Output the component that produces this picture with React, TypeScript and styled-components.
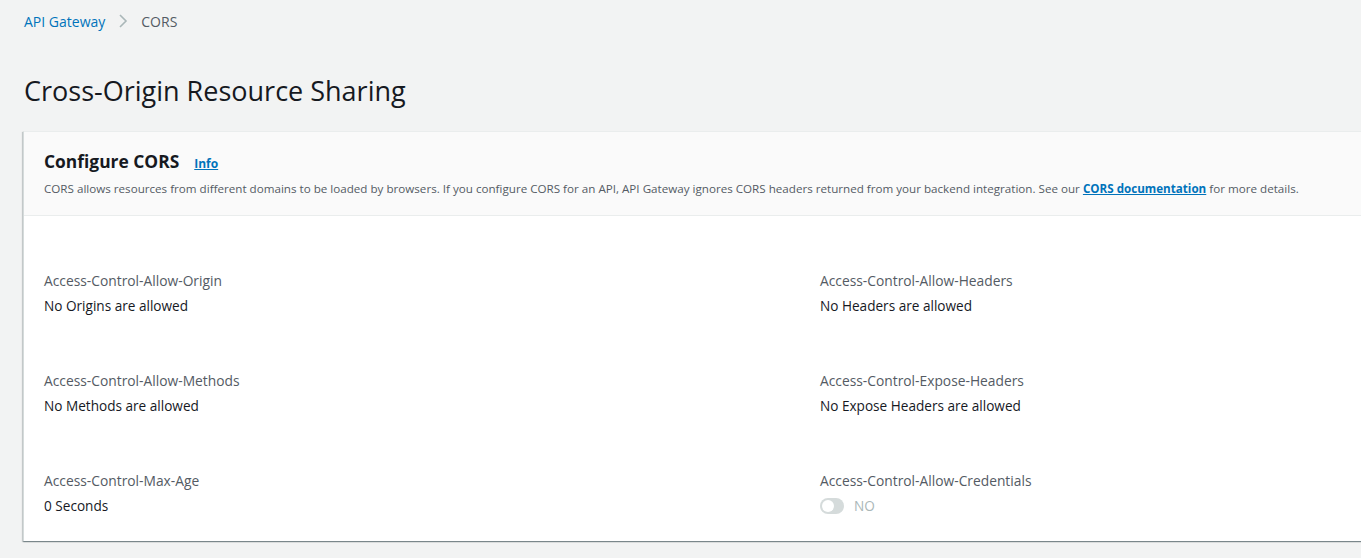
import React from "react";
import styled, { createGlobalStyle } from "styled-components";

const Global = createGlobalStyle`
  html, body { margin: 0; padding: 0; background: #f2f3f3; overflow: hidden; }
  body { font-family: "Open Sans", "Noto Sans", Arial, sans-serif; color: #16191f; }
  * { box-sizing: border-box; }
`;

const Page = styled.div`
  width: 1361px;
  height: 558px;
  overflow: hidden;
  padding: 0 0 0 24px;
`;

const Breadcrumbs = styled.nav`
  display: flex;
  align-items: center;
  height: 42px;
  font-size: 14px;
  gap: 12px;
`;

const Crumb = styled.a`
  color: #0073bb;
  text-decoration: none;
`;

const Current = styled.span`
  color: #545b64;
`;

const Title = styled.h1`
  margin: 0;
  padding: 29px 0 20px;
  font-size: 27px;
  font-weight: 400;
  line-height: 40px;
  color: #16191f;
`;

const Card = styled.section`
  width: 1600px;
  margin-left: -1px;
  background: #fff;
  border-left: 1px solid #d5dbdb;
  border-top: 1px solid #eaeded;
  box-shadow: 0 1px 1px 0 rgba(0, 28, 36, 0.3), 1px 1px 1px 0 rgba(0, 28, 36, 0.15), -1px 1px 1px 0 rgba(0, 28, 36, 0.15);
`;

const Header = styled.header`
  background: #fafafa;
  border-bottom: 1px solid #eaeded;
  padding: 18px 20px 18px;
`;

const HeadRow = styled.div`
  display: flex;
  align-items: baseline;
  gap: 15px;
`;

const H2 = styled.h2`
  margin: 0;
  font-size: 17.4px;
  font-weight: 700;
  line-height: 22px;
`;

const InfoLink = styled.a`
  font-size: 12px;
  font-weight: 700;
  color: #0073bb;
  text-decoration: underline;
`;

const Desc = styled.p`
  margin: 9px 0 0;
  font-size: 11.63px;
  line-height: 16px;
  color: #545b64;
`;

const DocLink = styled.a`
  font-weight: 700;
  color: #0073bb;
  text-decoration: underline;
`;

const Grid = styled.div`
  display: grid;
  grid-template-columns: 776px 1fr;
  grid-auto-rows: 100px;
  padding: 55px 20px 0;
  height: 325px;
`;

const Field = styled.div`
  display: flex;
  flex-direction: column;
  gap: 5px;
`;

const Label = styled.div`
  font-size: 13.8px;
  line-height: 20px;
  color: #545b64;
`;

const Value = styled.div`
  font-size: 13.6px;
  line-height: 20px;
  color: #16191f;
  display: flex;
  align-items: center;
  gap: 10px;
`;

const Toggle = styled.span`
  position: relative;
  width: 24px;
  height: 16px;
  border-radius: 8px;
  background: #d5dbdb;
  display: inline-block;
`;

const Knob = styled.span`
  position: absolute;
  left: 2px;
  top: 2px;
  width: 12px;
  height: 12px;
  border-radius: 50%;
  background: #fff;
`;

const Muted = styled.span`
  color: #aab7b8;
`;

const Chevron = () => (
  <svg width="12" height="16" viewBox="0 0 12 16" fill="none">
    <path d="M3 2l6 6-6 6" stroke="#aab7b8" strokeWidth="1.6" />
  </svg>
);

const fields: [string, React.ReactNode][] = [
  ["Access-Control-Allow-Origin", "No Origins are allowed"],
  ["Access-Control-Allow-Headers", "No Headers are allowed"],
  ["Access-Control-Allow-Methods", "No Methods are allowed"],
  ["Access-Control-Expose-Headers", "No Expose Headers are allowed"],
  ["Access-Control-Max-Age", "0 Seconds"],
  [
    "Access-Control-Allow-Credentials",
    <>
      <Toggle>
        <Knob />
      </Toggle>
      <Muted>NO</Muted>
    </>,
  ],
];

export default function App() {
  return (
    <>
      <Global />
      <Page>
        <Breadcrumbs>
          <Crumb href="#">API Gateway</Crumb>
          <Chevron />
          <Current>CORS</Current>
        </Breadcrumbs>
        <Title>Cross-Origin Resource Sharing</Title>
        <Card>
          <Header>
            <HeadRow>
              <H2>Configure CORS</H2>
              <InfoLink href="#">Info</InfoLink>
            </HeadRow>
            <Desc>
              CORS allows resources from different domains to be loaded by browsers. If you configure CORS for an API,
              API Gateway ignores CORS headers returned from your backend integration. See our{" "}
              <DocLink href="#">CORS documentation</DocLink> for more details.
            </Desc>
          </Header>
          <Grid>
            {fields.map(([l, v]) => (
              <Field key={l}>
                <Label>{l}</Label>
                <Value>{v}</Value>
              </Field>
            ))}
          </Grid>
        </Card>
      </Page>
    </>
  );
}
